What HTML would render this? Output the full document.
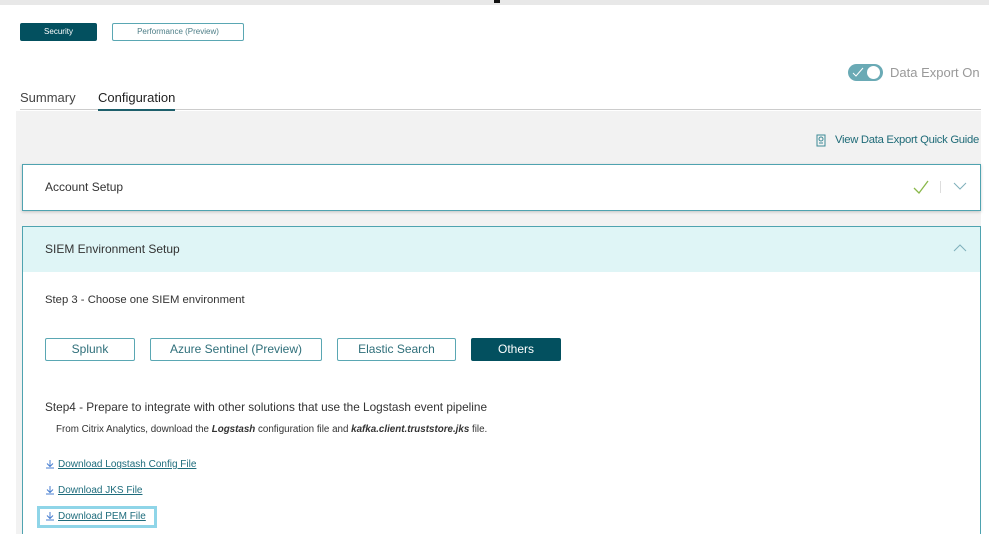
<!DOCTYPE html>
<html><head><style>
body{margin:0;width:989px;height:547px;background:#fff;font-family:"Liberation Sans",sans-serif;position:relative;overflow:hidden;color:#333}
.a{position:absolute;white-space:nowrap}
.btn{position:absolute;box-sizing:border-box;border:1px solid #5aa7b3;border-radius:2px;text-align:center;font-size:12px;color:#2f6f7a;background:#fff}
.lk{position:absolute;left:45px;font-size:10px;color:#1e6c7c;text-decoration:underline;white-space:nowrap}
.lk svg{vertical-align:-2px;margin-right:3px}
</style></head><body>
<div class="a" style="left:0;top:0;width:989px;height:5px;background:#e8e8e8"></div>
<div class="a" style="left:494px;top:0;width:6px;height:3px;background:#111"></div>
<div class="btn" style="left:20px;top:23px;width:77px;height:18px;background:#03505f;border-color:#03505f;color:#fff;font-size:8px;line-height:16px">Security</div>
<div class="btn" style="left:112px;top:23px;width:132px;height:18px;font-size:8px;line-height:16px;color:#4c7d86">Performance (Preview)</div>
<div class="a" style="left:848px;top:64px;width:35px;height:17px;border-radius:9px;background:#6aaab5"></div>
<div class="a" style="left:867px;top:66px;width:13px;height:13px;border-radius:7px;background:#fff"></div>
<svg class="a" style="left:852px;top:67px" width="12" height="10"><path d="M1 6 L4 9 L11 1" stroke="#fff" fill="none" stroke-width="1"/></svg>
<div class="a" style="left:890px;top:65px;font-size:13px;color:#999">Data Export On</div>
<div class="a" style="left:20px;top:90px;font-size:13px;color:#444">Summary</div>
<div class="a" style="left:98px;top:90px;font-size:13px;color:#222">Configuration</div>
<div class="a" style="left:20px;top:109px;width:961px;height:1px;background:#ccc"></div>
<div class="a" style="left:98px;top:109px;width:77px;height:2px;background:#1e5f6b"></div>
<div class="a" style="left:16px;top:111px;width:965px;height:423px;background:#f2f2f2"></div>
<svg class="a" style="left:816px;top:134px" width="10" height="13"><rect x="1" y="1" width="8" height="11" fill="none" stroke="#3c8a96"/><circle cx="5" cy="5" r="2" fill="none" stroke="#3c8a96"/><line x1="3" y1="9" x2="7" y2="9" stroke="#3c8a96"/></svg>
<div class="a" style="left:835px;top:134px;font-size:11.3px;color:#1f6b78;letter-spacing:-0.3px">View Data Export Quick Guide</div>
<div class="a" style="left:22px;top:164px;width:959px;height:47px;box-sizing:border-box;border:1px solid #4fa3b0;background:#fff;box-shadow:0 1px 3px rgba(0,0,0,.2)"></div>
<div class="a" style="left:45px;top:180px;font-size:12px;color:#333">Account Setup</div>
<svg class="a" style="left:912px;top:179px" width="18" height="16"><path d="M2 9 L7 14 L16 2" stroke="#8ab84a" fill="none" stroke-width="1.3"/></svg>
<div class="a" style="left:940px;top:181px;width:1px;height:12px;background:#ddd"></div>
<svg class="a" style="left:953px;top:182px" width="14" height="9"><path d="M1 1 L7 7 L13 1" stroke="#7fb0bb" fill="none"/></svg>
<div class="a" style="left:22px;top:226px;width:959px;height:320px;box-sizing:border-box;border:1px solid #4fa3b0;background:#fff"></div>
<div class="a" style="left:23px;top:227px;width:957px;height:45px;background:#dff5f6"></div>
<div class="a" style="left:45px;top:242px;font-size:12px;color:#333">SIEM Environment Setup</div>
<svg class="a" style="left:953px;top:243px" width="14" height="9"><path d="M1 8 L7 2 L13 8" stroke="#7fb0bb" fill="none"/></svg>
<div class="a" style="left:45px;top:294px;font-size:11.3px;color:#333">Step 3 - Choose one SIEM environment</div>
<div class="btn" style="left:45px;top:338px;width:90px;height:23px;line-height:21px">Splunk</div>
<div class="btn" style="left:150px;top:338px;width:172px;height:23px;line-height:21px">Azure Sentinel (Preview)</div>
<div class="btn" style="left:337px;top:338px;width:119px;height:23px;line-height:21px">Elastic Search</div>
<div class="btn" style="left:471px;top:338px;width:90px;height:23px;line-height:21px;background:#03505f;border-color:#03505f;color:#fff">Others</div>
<div class="a" style="left:45px;top:400px;font-size:11.8px;color:#333">Step4 - Prepare to integrate with other solutions that use the Logstash event pipeline</div>
<div class="a" style="left:56px;top:424px;font-size:9.8px;color:#333">From Citrix Analytics, download the <b><i>Logstash</i></b> configuration file and <b><i>kafka.client.truststore.jks</i></b> file.</div>
<div class="a" style="left:0;top:534px;width:989px;height:13px;background:#fff"></div>
<div class="a" style="left:37px;top:506px;width:120px;height:22px;box-sizing:border-box;border:3px solid #8fd5e8"></div>
<div class="lk" style="top:459px"><svg width="10" height="10"><path d="M5 1 V7 M2 4.5 L5 7.5 L8 4.5 M1 9 H9" stroke="#4a7fd0" fill="none"/></svg>Download Logstash Config File</div>
<div class="lk" style="top:485px"><svg width="10" height="10"><path d="M5 1 V7 M2 4.5 L5 7.5 L8 4.5 M1 9 H9" stroke="#4a7fd0" fill="none"/></svg>Download JKS File</div>
<div class="lk" style="top:511px"><svg width="10" height="10"><path d="M5 1 V7 M2 4.5 L5 7.5 L8 4.5 M1 9 H9" stroke="#4a7fd0" fill="none"/></svg>Download PEM File</div>
</body></html>
